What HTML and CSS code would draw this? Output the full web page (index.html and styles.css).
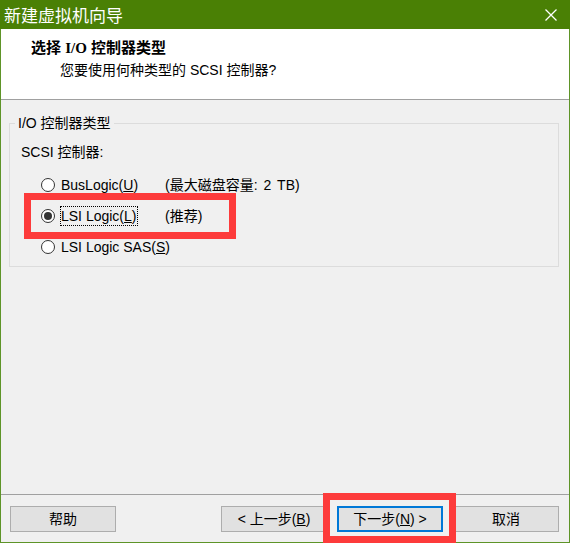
FILE: index.html
```html
<!DOCTYPE html>
<html lang="zh-CN">
<head>
<meta charset="utf-8">
<title>新建虚拟机向导</title>
<link rel="stylesheet" href="styles.css">
</head>
<body>
<div class="window">
  <div class="titlebar">
    <span class="title">新建虚拟机向导</span>
    <svg class="close" width="12" height="12" viewBox="0 0 12 12"><path d="M0.5 0.5 L11.5 11.5 M11.5 0.5 L0.5 11.5" stroke="#fff" stroke-width="1.3" fill="none"/></svg>
  </div>
  <div class="frame">
    <div class="header">
      <div class="heading">选择 <span class="serif">I/O</span> 控制器类型</div>
      <div class="subheading">您要使用何种类型的 SCSI 控制器?</div>
    </div>
    <div class="body">
      <fieldset class="group">
        <legend>I/O 控制器类型</legend>
        <div class="group-inner">
          <div class="caption">SCSI 控制器:</div>
          <div class="options">
            <div class="option">
              <span class="radio"></span>
              <span class="label">BusLogic(<u>U</u>)</span>
              <span class="note">(最大磁盘容量: 2 TB)</span>
            </div>
            <div class="option">
              <span class="radio checked"></span>
              <span class="label"><span class="focus">LSI Logic(<u>L</u>)</span></span>
              <span class="note">(推荐)</span>
            </div>
            <div class="option">
              <span class="radio"></span>
              <span class="label">LSI Logic SAS(<u>S</u>)</span>
            </div>
          </div>
        </div>
      </fieldset>
    </div>
    <div class="footer">
      <button class="btn">帮助</button>
      <div class="btn-group">
        <button class="btn">&lt; 上一步(<u>B</u>)</button>
        <button class="btn btn-default">下一步(<u>N</u>) &gt;</button>
        <button class="btn">取消</button>
      </div>
    </div>
  </div>
  <div class="mark mark-radio"></div>
  <div class="mark mark-next"></div>
</div>
</body>
</html>
```
FILE: styles.css
```css
html, body {
  margin: 0;
  padding: 0;
  background: #f0f0f0;
}
body {
  font-family: "Liberation Sans", "Noto Sans CJK SC", sans-serif;
  font-size: 14px;
  color: #000;
}
.window {
  width: 570px;
  height: 543px;
  display: flex;
  flex-direction: column;
  position: relative;
  overflow: hidden;
}
.titlebar {
  height: 29px;
  flex: none;
  box-sizing: border-box;
  background: #4a8005;
  color: #fff;
  display: flex;
  align-items: center;
  justify-content: space-between;
  padding: 0 13px 0 4px;
  font-family: "Noto Sans CJK SC", sans-serif;
  font-size: 17px;
  line-height: 20px;
}
.close {
  display: block;
}
.frame {
  flex: 1;
  display: flex;
  flex-direction: column;
  border: 1px solid #5e9428;
  border-top: 0;
  background: #f0f0f0;
}
.header {
  height: 71px;
  flex: none;
  box-sizing: border-box;
  background: #fff;
  border-bottom: 1px solid #a0a0a0;
  padding: 9px 0 0 30px;
}
.heading {
  font-size: 15px;
  font-weight: bold;
  line-height: 20px;
}
.serif {
  font-family: "Liberation Serif", serif;
}
.subheading {
  margin-top: 2px;
  padding-left: 29px;
  line-height: 20px;
}
.body {
  flex: 1;
  padding: 15px 10px 0 8px;
}
.group {
  margin: 0;
  padding: 0 0 9px 0;
  border: 1px solid #dcdcdc;
  min-width: 0;
}
.group legend {
  margin-left: 5px;
  padding: 0 3px;
  line-height: 16px;
}
.group-inner {
  padding-left: 11px;
}
.caption {
  margin-top: 11px;
  line-height: 20px;
}
.options {
  margin-top: 13px;
  display: flex;
  flex-direction: column;
  gap: 11px;
}
.option {
  display: flex;
  align-items: center;
  height: 20px;
  padding-left: 20px;
  white-space: nowrap;
}
.radio {
  width: 14px;
  height: 14px;
  box-sizing: border-box;
  border: 1px solid #333;
  border-radius: 50%;
  background: #fff;
  margin-right: 6px;
  display: flex;
  align-items: center;
  justify-content: center;
  flex: none;
}
.radio.checked::after {
  content: "";
  width: 8px;
  height: 8px;
  border-radius: 50%;
  background: #333;
}
.label {
  min-width: 104px;
  flex: none;
  line-height: 20px;
}
.focus {
  display: inline-block;
  margin-left: -1px;
  padding: 0 1px;
  outline: 1px dotted #000;
  outline-offset: -1px;
}
.note {
  line-height: 20px;
  word-spacing: 2px;
}
.footer {
  flex: none;
  border-top: 1px solid #a0a0a0;
  display: flex;
  justify-content: space-between;
  padding: 11px 10px 10px 9px;
}
.btn-group {
  display: flex;
  gap: 10px;
}
.btn {
  width: 106px;
  height: 26px;
  box-sizing: border-box;
  border: 1px solid #adadad;
  background: #e1e1e1;
  font-family: "Liberation Sans", "Noto Sans CJK SC", sans-serif;
  font-size: 14px;
  color: #000;
  padding: 0;
  margin: 0;
  line-height: 22px;
}
.btn-default {
  border: 2px solid #0078d7;
}
.mark {
  position: absolute;
  box-sizing: border-box;
  border: 7px solid #fd3b3b;
}
.mark-radio {
  left: 24px;
  top: 193px;
  width: 212px;
  height: 46px;
}
.mark-next {
  left: 323px;
  top: 493px;
  width: 133px;
  height: 50px;
}
```
